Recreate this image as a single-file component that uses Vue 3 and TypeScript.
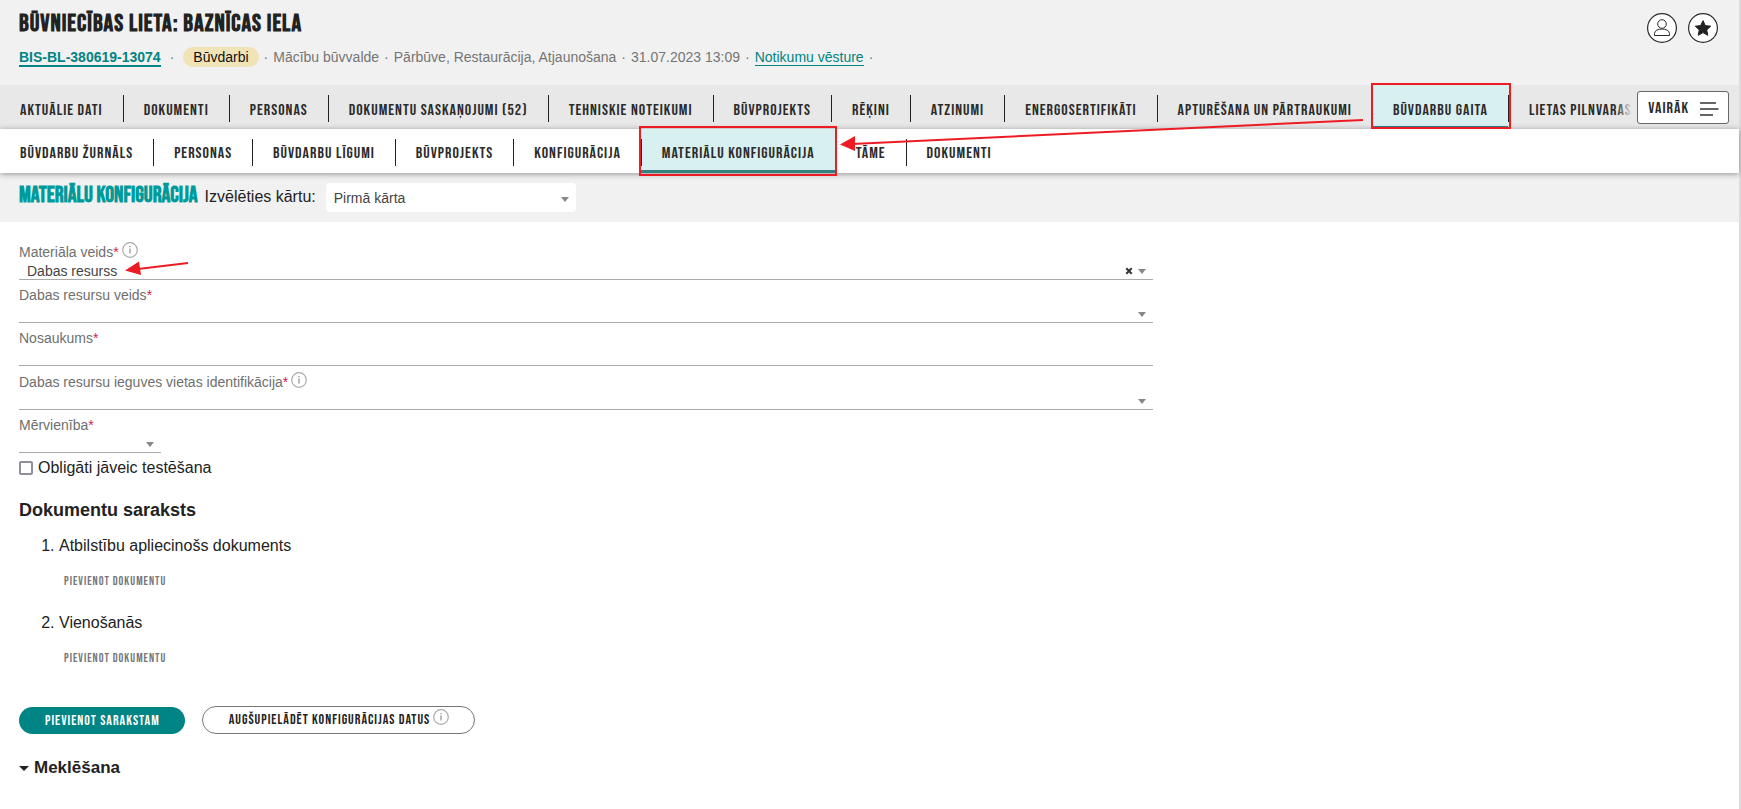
<template>
  <div class="page">
    <header class="case-header">
      <div class="case-info">
        <h1>Būvniecības lieta: Baznīcas iela</h1>
        <p class="meta">
          <a class="case-number" href="#">BIS-BL-380619-13074</a>
          <span class="dot">·</span>
          <span class="stage">Būvdarbi</span>
          <span>·</span>
          <template v-for="part in caseDetails" :key="part">
            <span>{{ part }}</span>
            <span>·</span>
          </template>
          <a class="history" href="#">Notikumu vēsture</a>
          <span>·</span>
        </p>
      </div>
      <div class="header-actions">
        <button type="button" class="round" aria-label="Profils">
          <svg viewBox="0 0 30 30" width="30" height="30" fill="none" stroke="#2b2b2b">
            <circle cx="15" cy="15" r="14.4" fill="#fff" stroke-width="1.2" />
            <circle cx="15" cy="11" r="4.3" />
            <path d="M7.500 22.500v-2c0-6 15-6 15 0v2z" stroke-linejoin="round" />
          </svg>
        </button>
        <button type="button" class="round" aria-label="Izlase">
          <svg viewBox="0 0 30 30" width="30" height="30">
            <circle cx="15" cy="15" r="14.4" fill="#fff" stroke="#2b2b2b" stroke-width="1.2" />
            <path d="M15 7.600l2.300 5 5.400.6-4 3.700 1.100 5.400-4.800-2.700-4.800 2.700 1.100-5.400-4-3.700 5.400-.6z" fill="#222" stroke="#222" stroke-linejoin="round" />
          </svg>
        </button>
      </div>
    </header>

    <nav class="tabs main-tabs" aria-label="Lietas sadaļas">
      <div class="tab-strip">
        <a v-for="tab in mainTabs" :key="tab" href="#" :class="{ active: tab === activeMain }">{{ tab }}</a>
      </div>
      <button type="button" class="more">
        Vairāk
        <svg viewBox="0 0 20 16" width="20" height="16" stroke="#333" stroke-width="1.4">
          <path d="M1 2h16M1 8h18.500M1 14h13" />
        </svg>
      </button>
    </nav>

    <nav class="tabs sub-tabs" aria-label="Būvdarbu gaita">
      <div class="tab-strip">
        <a v-for="tab in subTabs" :key="tab" href="#" :class="{ active: tab === activeSub }">{{ tab }}</a>
      </div>
    </nav>

    <div class="stage-bar">
      <h2>Materiālu konfigurācija</h2>
      <label for="round">Izvēlēties kārtu:</label>
      <span class="picker">
        <select id="round"><option>Pirmā kārta</option></select>
        <span class="caret"></span>
      </span>
    </div>

    <main>
      <form @submit.prevent>
        <div v-for="field in fields" :key="field.id" class="field" :class="{ short: field.short, hinted: field.info }">
          <div class="label-row">
            <label :for="field.id">{{ field.label }}<em>*</em></label>
            <svg v-if="field.info" class="info" viewBox="0 0 16 16" width="16" height="16">
              <circle cx="8" cy="8" r="7.300" />
              <path d="M8 6.500v5M8 4v1.300" />
            </svg>
          </div>
          <div class="control">
            <input v-if="field.kind === 'text'" :id="field.id" type="text" />
            <template v-else>
              <select :id="field.id"><option>{{ field.value }}</option></select>
              <button v-if="field.value" type="button" class="clear" aria-label="Notīrīt">
                <svg viewBox="0 0 8 8" width="8" height="8"><path d="M1.300 1.300l5.400 5.400M6.700 1.300l-5.400 5.400" /></svg>
              </button>
              <span class="caret"></span>
            </template>
          </div>
        </div>

        <label class="check"><input type="checkbox" />Obligāti jāveic testēšana</label>

        <h3>Dokumentu saraksts</h3>
        <ol>
          <li v-for="doc in documents" :key="doc">
            {{ doc }}
            <div class="add-row"><button type="button" class="add">Pievienot dokumentu</button></div>
          </li>
        </ol>

        <div class="actions">
          <button type="submit" class="pill primary">Pievienot sarakstam</button>
          <button type="button" class="pill outlined">
            Augšupielādēt konfigurācijas datus
            <svg class="info" viewBox="0 0 16 16" width="16" height="16">
              <circle cx="8" cy="8" r="7.300" />
              <path d="M8 6.500v5M8 4v1.300" />
            </svg>
          </button>
        </div>

        <details>
          <summary><span class="fold"></span>Meklēšana</summary>
        </details>
      </form>
    </main>

    <svg class="notes" width="1400" height="300" viewBox="0 0 1400 300" aria-hidden="true">
      <path d="M1363 120L852 144" />
      <polygon points="840,144.500 855,136 855,151" />
      <path d="M188 263L138 269" />
      <polygon points="125,270.500 139,261.500 141,275" />
    </svg>
  </div>
</template>

<script setup lang="ts">
interface Field {
  id: string
  label: string
  kind: 'select' | 'text'
  value?: string
  info?: boolean
  short?: boolean
}

const caseDetails: string[] = [
  'Mācību būvvalde',
  'Pārbūve, Restaurācija, Atjaunošana',
  '31.07.2023 13:09',
]

const mainTabs: string[] = [
  'Aktuālie dati',
  'Dokumenti',
  'Personas',
  'Dokumentu saskaņojumi (52)',
  'Tehniskie noteikumi',
  'Būvprojekts',
  'Rēķini',
  'Atzinumi',
  'Energosertifikāti',
  'Apturēšana un pārtraukumi',
  'Būvdarbu gaita',
  'Lietas pilnvaras',
]
const activeMain = 'Būvdarbu gaita'

const subTabs: string[] = [
  'Būvdarbu žurnāls',
  'Personas',
  'Būvdarbu līgumi',
  'Būvprojekts',
  'Konfigurācija',
  'Materiālu konfigurācija',
  'Tāme',
  'Dokumenti',
]
const activeSub = 'Materiālu konfigurācija'

const fields: Field[] = [
  { id: 'material', label: 'Materiāla veids', kind: 'select', value: 'Dabas resurss', info: true },
  { id: 'resource', label: 'Dabas resursu veids', kind: 'select' },
  { id: 'title', label: 'Nosaukums', kind: 'text' },
  { id: 'origin', label: 'Dabas resursu ieguves vietas identifikācija', kind: 'select', info: true },
  { id: 'unit', label: 'Mērvienība', kind: 'select', short: true },
]

const documents: string[] = ['Atbilstību apliecinošs dokuments', 'Vienošanās']
</script>

<style>
body {
  margin: 0;
  background: #fff;
}
</style>

<style scoped>
.page {
  position: relative;
  box-sizing: border-box;
  min-height: 100vh;
  border-right: 2px solid #dcdcdc;
  font-family: "Liberation Sans", Arial, sans-serif;
  font-size: 16px;
  line-height: 20px;
  color: #222;
}
h1, h2, h3, p {
  margin: 0;
}
button, select, input {
  font: inherit;
  color: inherit;
}
button {
  padding: 0;
  border: 0;
  background: none;
}
.case-header {
  display: flex;
  justify-content: space-between;
  height: 85px;
  padding: 0 21px 0 19px;
  box-sizing: border-box;
  background: #f1f1f1;
}
h1 {
  padding-top: 10px;
  font: bold 24px/28px "Bebas Neue", "Liberation Sans", sans-serif;
  letter-spacing: 1px;
  text-transform: uppercase;
}
.meta {
  display: flex;
  align-items: baseline;
  gap: 5px;
  margin-top: 9px;
  font-size: 14px;
  color: #757575;
}
.meta a {
  color: #008484;
  line-height: 16px;
  text-decoration: none;
  border-bottom: 1px solid #008484;
}
.meta .case-number {
  font-weight: bold;
  border-bottom-width: 2px;
}
.dot {
  padding: 0 4px;
}
.stage {
  padding: 0 10px;
  border-radius: 10px;
  background: #f0e3b6;
  color: #111;
}
.header-actions {
  display: flex;
  gap: 11px;
  padding-top: 13px;
}
.round, .round svg {
  display: block;
  width: 30px;
  height: 30px;
}
.tabs {
  display: flex;
  height: 44px;
  font: 16px/20px "Bebas Neue", "Liberation Sans", sans-serif;
  letter-spacing: 1px;
  text-transform: uppercase;
}
.main-tabs {
  background: #e8e8e8;
}
.sub-tabs {
  position: relative;
  background: #fff;
  box-shadow: 0 1px 6px rgba(0, 0, 0, 0.4);
}
.tab-strip {
  position: relative;
  display: flex;
  flex: 1;
  min-width: 0;
  overflow-x: clip;
}
.main-tabs .tab-strip::after {
  content: "";
  position: absolute;
  inset: 0 0 0 auto;
  width: 16px;
  background: linear-gradient(to right, rgba(232, 232, 232, 0), #e8e8e8);
}
.tab-strip a {
  position: relative;
  display: flex;
  flex: none;
  align-items: center;
  padding: 5px 20px 0;
  color: #2b2b2b;
  text-decoration: none;
}
.main-tabs .tab-strip a {
  padding-top: 7px;
}
.tab-strip a + a {
  padding-left: 21px;
}
.tab-strip a + a::before {
  content: "";
  position: absolute;
  left: 0;
  top: 10px;
  width: 1px;
  height: 27px;
  background: #222;
}
.tab-strip .active {
  background: #d9f0f0;
  box-shadow: inset 0 -3px #378080;
}
.tab-strip .active::after {
  content: "";
  position: absolute;
  inset: -3px -2px;
  border: 2px solid #ed1c24;
  z-index: 2;
}
.main-tabs .active::after {
  inset: -2px -3px 0 -1px;
}
.more {
  display: flex;
  align-items: center;
  gap: 10px;
  flex: none;
  height: 33px;
  margin: 6px 10px 0 5px;
  padding: 2px 9px 0 10px;
  box-sizing: border-box;
  border: 1px solid #666;
  border-radius: 3px;
  background: #fff;
  color: #2b2b2b;
  letter-spacing: inherit;
  text-transform: inherit;
}
.stage-bar {
  display: flex;
  align-items: center;
  gap: 7px;
  height: 47px;
  padding: 0 0 2px 19px;
  background: #f1f1f1;
}
.stage-bar h2 {
  padding-bottom: 2px;
  font: bold 22px/24px "Bebas Neue", "Liberation Sans", sans-serif;
  text-transform: uppercase;
  color: #009a9a;
}
.picker, .control {
  position: relative;
  display: block;
}
.picker {
  width: 250px;
  height: 29px;
  margin: 2px 0 0 3px;
  border-radius: 4px;
  background: #fff;
  color: #444;
}
.picker select {
  padding-left: 8px;
}
select, input[type="text"] {
  display: block;
  width: 100%;
  height: 100%;
  margin: 0;
  box-sizing: border-box;
  border: 0;
  padding: 0 8px;
  appearance: none;
  background: none;
  outline: 0;
  font-size: 14px;
}
.caret {
  position: absolute;
  right: 7px;
  top: 50%;
  margin-top: -1px;
  border: 4px solid transparent;
  border-top: 5px solid #888;
  border-bottom: 0;
  pointer-events: none;
}
main {
  padding: 14px 19px 34px;
}
.field {
  width: 66.6667%;
  padding-top: 6px;
}
.field.hinted {
  padding-top: 7px;
}
.field.short {
  width: 142px;
}
.label-row {
  display: flex;
  gap: 3px;
  height: 18px;
  font-size: 14px;
  line-height: 18px;
  color: #6f6f6f;
}
.label-row em {
  font-style: normal;
  color: #d81b50;
}
.label-row .info {
  margin-top: -1px;
}
.info {
  flex: none;
  fill: none;
  stroke: #aaa;
  stroke-width: 1.2;
}
.info path {
  stroke-width: 1.6;
}
.control {
  height: 18px;
  border-bottom: 1px solid #aaa;
  color: #444;
}
.clear {
  position: absolute;
  right: 20px;
  top: 6px;
  line-height: 0;
}
.clear svg {
  stroke: #333;
  stroke-width: 2;
}
.check {
  display: flex;
  align-items: center;
  gap: 5px;
  width: fit-content;
  margin-top: 5px;
}
.check input {
  box-sizing: border-box;
  width: 14px;
  height: 14px;
  margin: 0;
  appearance: none;
  border: 2px solid #8f8f9d;
  border-radius: 2px;
}
.check input:checked {
  background: #008484;
}
h3 {
  margin-top: 20px;
  font-size: 18px;
  line-height: 24px;
}
ol {
  margin: 14px 0 0;
  padding-left: 40px;
}
li + li {
  margin-top: 19px;
}
.add-row {
  display: flex;
  padding: 14px 0 0 5px;
}
.add, .pill {
  font-family: "Bebas Neue", "Liberation Sans", sans-serif;
  letter-spacing: 1px;
  text-transform: uppercase;
}
.add {
  height: 24px;
  font-size: 12px;
  color: #777;
}
.actions {
  display: flex;
  align-items: flex-end;
  gap: 17px;
  margin-top: 35px;
}
.pill {
  display: flex;
  align-items: center;
  box-sizing: border-box;
  height: 27px;
  padding: 0 25px 0 26px;
  border-radius: 14px;
  font-size: 14px;
}
.primary {
  background: #008484;
  color: #fff;
}
.outlined {
  gap: 3px;
  height: 28px;
  border: 1px solid #777;
}
.outlined .info {
  margin-bottom: 6px;
}
details {
  margin-top: 23px;
}
summary {
  display: flex;
  align-items: center;
  gap: 5px;
  width: fit-content;
  list-style: none;
  font-size: 17px;
  font-weight: bold;
  line-height: 22px;
}
.fold {
  border: 5px solid transparent;
  border-top-color: #222;
  border-bottom: 0;
}
.notes {
  position: absolute;
  left: 0;
  top: 0;
  z-index: 3;
  pointer-events: none;
  fill: #ed1c24;
}
.notes path {
  stroke: #ed1c24;
  stroke-width: 2;
}
</style>
